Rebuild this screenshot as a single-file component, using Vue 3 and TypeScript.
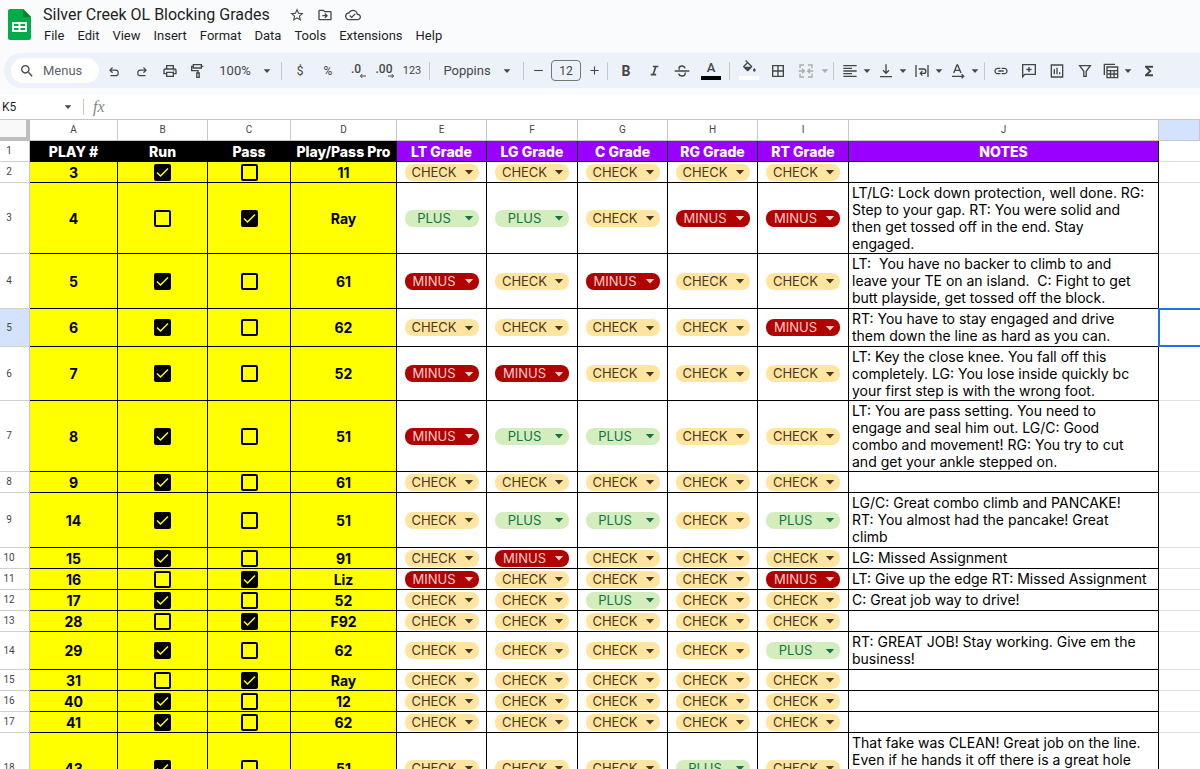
<script setup lang="ts">
import { h, ref, type FunctionalComponent } from 'vue'

interface Glyph { d: string; line?: number }

const glyphs: Record<string, Glyph> = {
  star: { d: 'M22 9.24l-7.19-.62L12 2 9.19 8.63 2 9.24l5.46 4.73L5.82 21 12 17.27 18.18 21l-1.63-7.03L22 9.24zM12 15.4l-3.76 2.27 1-4.28-3.32-2.88 4.38-.38L12 6.1l1.71 4.04 4.38.38-3.32 2.88 1 4.28L12 15.4z' },
  move: { d: 'M20 6h-8l-2-2H4c-1.1 0-2 .9-2 2v12c0 1.1.9 2 2 2h16c1.1 0 2-.9 2-2V8c0-1.1-.9-2-2-2zm0 12H4V6h5.17l2 2H20v10zM12.5 17l4-4-4-4-1.4 1.4 1.6 1.6H8v2h4.7l-1.6 1.6z' },
  cloud: { d: 'M19.35 10.04C18.67 6.59 15.64 4 12 4 9.11 4 6.61 5.64 5.36 8.04 2.35 8.36 0 10.91 0 14c0 3.31 2.69 6 6 6h13c2.76 0 5-2.24 5-5 0-2.64-2.05-4.78-4.65-4.96zM19 18H6c-2.21 0-4-1.79-4-4 0-2.05 1.53-3.76 3.56-3.97l1.07-.11.5-.95C8.08 7.14 9.94 6 12 6c2.62 0 4.88 1.86 5.39 4.43l.3 1.5 1.53.11c1.56.1 2.78 1.41 2.78 2.96 0 1.65-1.35 3-3 3zm-9-3.82l-2.09-2.09L6.5 13.5 10 17l6.01-6.01-1.41-1.41z' },
  search: { d: 'M15.5 14h-.79l-.28-.27C15.41 12.59 16 11.11 16 9.5 16 5.91 13.09 3 9.5 3S3 5.91 3 9.5 5.91 16 9.5 16c1.61 0 3.09-.59 4.23-1.57l.27.28v.79l5 4.99L20.49 19l-4.99-5zm-6 0C7.01 14 5 11.99 5 9.5S7.01 5 9.5 5 14 7.01 14 9.5 11.99 14 9.5 14z' },
  undo: { d: 'M6 20h8.5a4.75 4.75 0 0 0 0-9.5H5M9.5 6L5 10.5 9.5 15', line: 2 },
  redo: { d: 'M18 20H9.500a4.750 4.750 0 0 1 0-9.500H19M14.500 6L19 10.500 14.500 15', line: 2 },
  print: { d: 'M19 8h-1V3H6v5H5c-1.66 0-3 1.34-3 3v6h4v4h12v-4h4v-6c0-1.66-1.34-3-3-3zM8 5h8v3H8V5zm8 12v2H8v-4h8v2zm2-2v-2H6v2H4v-4c0-.55.45-1 1-1h14c.55 0 1 .45 1 1v4h-2zM17 10.700h1.800v1.600H17z' },
  paint: { d: 'M5 2.500h12v5H5zM5 5H2.500v6.500H12V15M17 5h3M10.200 15h3.600v6.500h-3.600z', line: 2 },
  minus: { d: 'M4 12h16', line: 2 },
  plus: { d: 'M4.500 12h15M12 4.500v15', line: 2 },
  italic: { d: 'M9 4.500h10M5 19.500h10M14.500 4.500l-5 15', line: 3 },
  strike: { d: 'M1 12h22M16.500 8c-.5-2.300-2.200-3.500-4.500-3.500-2.500 0-4.500 1.300-4.500 3.500 0 .8.3 1.500.8 2M7 16c.5 2.300 2.500 3.500 5 3.500 2.700 0 4.800-1.400 4.800-3.500 0-.7-.2-1.300-.6-1.800', line: 2 },
  fill: { d: 'M16.560 8.940L7.620 0 6.210 1.410l2.380 2.380-5.150 5.150c-.59.59-.59 1.540 0 2.120l5.500 5.500c.29.29.68.44 1.060.44s.77-.15 1.060-.44l5.500-5.500c.59-.58.59-1.530 0-2.120zM5.210 10L10 5.210 14.790 10H5.210zM20 12s-2 2.170-2 3.500c0 1.100.9 2 2 2s2-.9 2-2c0-1.330-2-3.500-2-3.500z' },
  borders: { d: 'M3 3v18h18V3H3zm8 16H5v-6h6v6zm0-8H5V5h6v6zm8 8h-6v-6h6v6zm0-8h-6V5h6v6z' },
  merge: { d: 'M9 3H3v5M3 16v5h6M15 3h6v5M21 16v5h-6M1 12h7M6 8.500L9.500 12 6 15.500M23 12h-7M18 8.500L14.500 12l3.500 3.500', line: 2 },
  align: { d: 'M15 15H2v2h13v-2zm0-8H2v2h13V7zM2 13h20v-2H2v2zm0 8h20v-2H2v2zM2 3v2h20V3H2z' },
  bottom: { d: 'M12 2v13M7.500 11l4.500 4.500 4.500-4.500M3 20.500h18', line: 2 },
  wrap: { d: 'M3 3v18M21 3v18M7 9h7.500a3 3 0 0 1 0 6.500H10M12.500 12L9.500 15.500l3 3.500', line: 2 },
  rotate: { d: 'M5.500 15l5-12h1l5 12M7.500 11h7M3 20h17M17.500 17l3 3-3 3', line: 2 },
  link: { d: 'M3.900 12c0-1.710 1.390-3.100 3.100-3.100h4V7H7c-2.760 0-5 2.240-5 5s2.240 5 5 5h4v-1.900H7c-1.710 0-3.100-1.390-3.100-3.100zM8 13h8v-2H8v2zm9-6h-4v1.900h4c1.710 0 3.100 1.390 3.100 3.100s-1.390 3.100-3.100 3.100h-4V17h4c2.760 0 5-2.240 5-5s-2.240-5-5-5z' },
  comment: { d: 'M2.500 20.500v-18h19v14.500H5.500zM12 6v7.500M8.200 9.800h7.600', line: 2 },
  chart: { d: 'M3.500 3h17v18h-17zM8 9.500V17M12 7v10M16 14v3', line: 2 },
  filter: { d: 'M4 4h16l-6.200 8.500V20h-3.600v-7.500z', line: 2 },
  views: { d: 'M2 18V2h16M6 6h16v16H6zM6 11.500h16M6 16.500h16M11.300 11.500V22M16.600 11.500V22', line: 2 },
  sum: { d: 'M18 4H6v2.500L12 12l-6 5.500V20h12v-3h-7l5-5-5-5h7z' },
  left: { d: 'M21 12H5M10 6l-6 6 6 6', line: 3 },
  right: { d: 'M3 12h16M14 6l6 6-6 6', line: 3 },
  caret: { d: 'M2 7h20L12 18z' },
}

const Icon: FunctionalComponent<{ name: string }> = (props) => {
  const g = glyphs[props.name]
  return h('svg', { viewBox: '0 0 24 24', 'aria-hidden': 'true' }, [
    h('path', g.line
      ? { d: g.d, fill: 'none', stroke: 'currentColor', 'stroke-width': g.line }
      : { d: g.d, fill: 'currentColor' }),
  ])
}
Icon.props = ['name']

const menus = ['File', 'Edit', 'View', 'Insert', 'Format', 'Data', 'Tools', 'Extensions', 'Help']
const letters = ['A', 'B', 'C', 'D', 'E', 'F', 'G', 'H', 'I', 'J', '']
const titles = ['PLAY #', 'Run', 'Pass', 'Play/Pass Pro', 'LT Grade', 'LG Grade', 'C Grade', 'RG Grade', 'RT Grade', 'NOTES']
const positions = ['LT', 'LG', 'C', 'RG', 'RT']
const options = ['CHECK', 'PLUS', 'MINUS']
const names: Record<string, string> = { C: 'CHECK', P: 'PLUS', M: 'MINUS' }

interface Play { num: string; run: boolean; pro: string; grades: string[]; height: number; notes: string[] }

const play = (num: string, run: boolean, pro: string, code: string, height: number, ...notes: string[]): Play =>
  ({ num, run, pro, grades: code.split('').map((c) => names[c]), height, notes })

const plays = ref<Play[]>([
  play('3', true, '11', 'CCCCC', 21),
  play('4', false, 'Ray', 'PPCMM', 71, 'LT/LG: Lock down protection, well done. RG:', 'Step to your gap. RT: You were solid and', 'then get tossed off in the end. Stay', 'engaged.'),
  play('5', true, '61', 'MCMCC', 55, 'LT:  You have no backer to climb to and', 'leave your TE on an island.  C: Fight to get', 'butt playside, get tossed off the block.'),
  play('6', true, '62', 'CCCCM', 38, 'RT: You have to stay engaged and drive', 'them down the line as hard as you can.'),
  play('7', true, '52', 'MMCCC', 54, 'LT: Key the close knee. You fall off this', 'completely. LG: You lose inside quickly bc', 'your first step is with the wrong foot.'),
  play('8', true, '51', 'MPPCC', 71, 'LT: You are pass setting. You need to', 'engage and seal him out. LG/C: Good', 'combo and movement! RG: You try to cut', 'and get your ankle stepped on.'),
  play('9', true, '61', 'CCCCC', 21),
  play('14', true, '51', 'CPPCP', 55, 'LG/C: Great combo climb and PANCAKE!', 'RT: You almost had the pancake! Great', 'climb'),
  play('15', true, '91', 'CMCCC', 21, 'LG: Missed Assignment'),
  play('16', false, 'Liz', 'MCCCM', 21, 'LT: Give up the edge RT: Missed Assignment'),
  play('17', true, '52', 'CCPCC', 21, 'C: Great job way to drive!'),
  play('28', false, 'F92', 'CCCCC', 21),
  play('29', true, '62', 'CCCCP', 38, 'RT: GREAT JOB! Stay working. Give em the', 'business!'),
  play('31', false, 'Ray', 'CCCCC', 21),
  play('40', true, '12', 'CCCCC', 21),
  play('41', true, '62', 'CCCCC', 21),
  play('43', true, '51', 'CCCPC', 71, 'That fake was CLEAN! Great job on the line.', 'Even if he hands it off there is a great hole'),
])
</script>

<template>
  <div class="app">
    <header class="top">
      <svg class="logo" viewBox="0 0 23 31" aria-hidden="true">
        <path d="M2 0h13l8 8v21a2 2 0 0 1-2 2H2a2 2 0 0 1-2-2V2a2 2 0 0 1 2-2z" fill="#00ac47" />
        <path d="M15 0l8 8h-8z" fill="#00832d" />
        <path d="M4 13h15v10H4zM6 15v2h4.500v-2zM12.500 15v2H17v-2zM6 19v2h4.500v-2zM12.500 19v2H17v-2z" fill="#fff" fill-rule="evenodd" />
      </svg>
      <div class="heading">
        <div class="title-row">
          <h1>Silver Creek OL Blocking Grades</h1>
          <button aria-label="Star"><Icon name="star" /></button>
          <button aria-label="Move"><Icon name="move" /></button>
          <button aria-label="Saved to Drive"><Icon name="cloud" /></button>
        </div>
        <nav class="menus">
          <button v-for="m in menus" :key="m">{{ m }}</button>
        </nav>
      </div>
    </header>

    <div class="toolbar" role="toolbar">
      <label class="search"><Icon name="search" /><input type="text" placeholder="Menus" aria-label="Menus" /></label>
      <button aria-label="Undo"><Icon name="undo" class="low" /></button>
      <button aria-label="Redo"><Icon name="redo" class="low" /></button>
      <button aria-label="Print"><Icon name="print" /></button>
      <button aria-label="Paint format"><Icon name="paint" /></button>
      <button class="zoom">100%<Icon name="caret" class="caret" /></button>
      <i class="rule"></i>
      <button class="small" aria-label="Currency">$</button>
      <button class="small" aria-label="Percent">%</button>
      <button class="decimal" aria-label="Decrease decimal places">.0<Icon name="left" class="arrow" /></button>
      <button class="decimal" aria-label="Increase decimal places">.00<Icon name="right" class="arrow" /></button>
      <button class="digits">123</button>
      <i class="rule"></i>
      <button class="family">Poppins<Icon name="caret" class="caret" /></button>
      <i class="rule"></i>
      <button class="step" aria-label="Decrease font size"><Icon name="minus" class="tiny" /></button>
      <input class="size" type="text" value="12" aria-label="Font size" />
      <button class="step" aria-label="Increase font size"><Icon name="plus" class="tiny" /></button>
      <i class="rule"></i>
      <button class="bold" aria-label="Bold">B</button>
      <button aria-label="Italic"><Icon name="italic" class="tiny" /></button>
      <button aria-label="Strikethrough"><Icon name="strike" /></button>
      <button class="color" aria-label="Text color"><b>A</b><i class="swatch black"></i></button>
      <i class="rule"></i>
      <button class="color" aria-label="Fill color"><Icon name="fill" /><i class="swatch white"></i></button>
      <button aria-label="Borders"><Icon name="borders" /></button>
      <button class="off" aria-label="Merge cells"><Icon name="merge" /></button>
      <button class="off slim" aria-label="Merge type"><Icon name="caret" class="caret" /></button>
      <i class="rule"></i>
      <button class="split" aria-label="Horizontal align"><Icon name="align" /><Icon name="caret" class="caret" /></button>
      <button class="split" aria-label="Vertical align"><Icon name="bottom" /><Icon name="caret" class="caret" /></button>
      <button class="split" aria-label="Text wrapping"><Icon name="wrap" /><Icon name="caret" class="caret" /></button>
      <button class="split" aria-label="Text rotation"><Icon name="rotate" /><Icon name="caret" class="caret" /></button>
      <i class="rule tight"></i>
      <button aria-label="Insert link"><Icon name="link" /></button>
      <button aria-label="Insert comment"><Icon name="comment" /></button>
      <button aria-label="Insert chart"><Icon name="chart" /></button>
      <button aria-label="Filter"><Icon name="filter" /></button>
      <button class="split" aria-label="Filter views"><Icon name="views" /><Icon name="caret" class="caret" /></button>
      <button aria-label="Functions"><Icon name="sum" /></button>
    </div>

    <div class="formula">
      <input class="cell-name" type="text" value="K5" aria-label="Name box" />
      <button aria-label="Named ranges"><Icon name="caret" class="caret" /></button>
      <i class="rule"></i>
      <span class="fx">fx</span>
      <input class="entry" type="text" aria-label="Formula" />
    </div>

    <main class="sheet">
      <table>
        <colgroup>
          <col class="w-head" /><col class="w-a" /><col class="w-b" /><col class="w-c" /><col class="w-d" />
          <col class="w-b" /><col class="w-f" /><col class="w-b" /><col class="w-b" /><col class="w-f" />
          <col class="w-notes" /><col />
        </colgroup>
        <thead>
          <tr class="letters">
            <td class="corner"></td>
            <th v-for="(l, i) in letters" :key="i" scope="col" :class="{ active: i === 10 }">{{ l }}</th>
          </tr>
        </thead>
        <tbody>
          <tr class="titles">
            <th class="num" scope="row">1</th>
            <td v-for="(t, i) in titles" :key="t" :class="i < 4 ? 'dark' : 'purple'">{{ t }}</td>
            <td class="blank"></td>
          </tr>
          <tr v-for="(p, r) in plays" :key="p.num" :style="{ height: p.height + 'px' }">
            <th class="num" :class="{ active: r === 3 }" scope="row">{{ r + 2 }}</th>
            <td class="yellow">{{ p.num }}</td>
            <td v-for="kind in ['Run', 'Pass']" :key="kind" class="yellow">
              <label class="tick">
                <input type="checkbox" :checked="(kind === 'Run') === p.run" :aria-label="`${kind}, play ${p.num}`" />
                <svg viewBox="0 0 17 17" aria-hidden="true"><path d="M3 8.500l3.500 3.500L14 4.500" fill="none" stroke="#ff0" stroke-width="1.500" /></svg>
              </label>
            </td>
            <td class="yellow">{{ p.pro }}</td>
            <td v-for="(g, i) in p.grades" :key="i" class="grade">
              <span class="chip" :class="g.toLowerCase()">
                <select v-model="p.grades[i]" :aria-label="`${positions[i]} grade, play ${p.num}`">
                  <option v-for="o in options" :key="o">{{ o }}</option>
                </select>
                <Icon name="caret" class="chip-caret" />
              </span>
            </td>
            <td class="notes"><div v-for="n in p.notes" :key="n">{{ n }}</div></td>
            <td class="blank" :class="{ selected: r === 3 }"></td>
          </tr>
        </tbody>
      </table>
    </main>
  </div>
</template>

<style>
body { margin: 0; overflow: hidden; }
</style>

<style scoped>
.app {
  display: flex;
  flex-direction: column;
  height: 100vh;
  overflow: hidden;
  background: #f9fbfd;
  color: #444746;
  font-family: Roboto, "Liberation Sans", sans-serif;
}
* { box-sizing: border-box; }
button, input, select { margin: 0; padding: 0; border: 0; background: none; color: inherit; font: inherit; outline: 0; }
svg { display: block; flex: none; }

.top { display: flex; gap: 12px; padding: 4px 8px 0; flex: none; }
.logo { width: 23px; height: 31px; margin-top: 5px; }
.title-row { display: flex; align-items: center; height: 21px; }
.title-row h1 { margin: 0 13px 0 0; font-size: 16px; line-height: 21px; font-weight: 400; color: #1f1f1f; white-space: nowrap; }
.title-row button { display: grid; place-items: center; width: 28px; height: 21px; }
.title-row svg { width: 16px; height: 16px; }
.menus { display: flex; gap: 13px; padding: 2px 0 0 1px; }
.menus button { font-size: 13px; line-height: 18px; color: #1f1f1f; }

.toolbar {
  display: flex;
  align-items: center;
  flex: none;
  height: 35px;
  margin: 8px 0 6px 4px;
  padding-left: 7px;
  border-radius: 18px 0 0 18px;
  background: #edf2fa;
  font-size: 13px;
}
.toolbar button { display: flex; align-items: center; justify-content: center; flex: none; width: 28px; height: 26px; }
.toolbar svg { width: 16px; height: 16px; }
.toolbar svg.low { width: 14px; height: 14px; }
.toolbar svg.tiny { width: 13px; height: 13px; }
.toolbar svg.caret, .formula svg.caret { width: 8px; height: 8px; }
.search { display: flex; align-items: center; gap: 8px; flex: none; width: 88px; height: 25px; margin-right: 1px; padding-left: 8px; border-radius: 13px; background: #fff; }
.search input { width: 50px; }
.search input::placeholder { color: #5f6368; opacity: 1; }
.toolbar .zoom { width: 66px; gap: 12px; }
.toolbar .family { width: 86px; gap: 12px; }
.rule { flex: none; width: 1px; height: 18px; margin: 0 4px 0 3px; background: #c7c7c7; }
.rule.tight { margin: 0 2px; }
.toolbar .small { font-size: 12px; }
.toolbar .digits { font-size: 11px; }
.toolbar .decimal { flex-direction: column; align-items: center; padding-top: 3px; font-size: 12px; line-height: 10px; font-weight: 500; }
.toolbar svg.arrow { width: 8px; height: 8px; margin: -2px 0 0 14px; }
.toolbar .step { width: 20px; }
.size { flex: none; width: 30px; height: 21px; margin: 0 3px; border: 1px solid #747775; border-radius: 4px; text-align: center; font-size: 12px; }
.toolbar .bold { font-size: 14px; font-weight: 700; }
.toolbar .color { flex-direction: column; width: 30px; height: 28px; justify-content: space-between; padding: 3px 0 5px; }
.color svg { margin-bottom: -2px; }
.color b { font-size: 13px; line-height: 16px; font-weight: 500; }
.swatch { flex: none; width: 20px; height: 4px; }
.black { background: #000; }
.white { background: #fff; }
.off { opacity: .4; }
.toolbar .slim { width: 10px; }
.toolbar .split { width: 36px; gap: 5px; }

.formula { display: flex; align-items: center; flex: none; height: 26px; border-bottom: 1px solid #c7c7c7; background: #fff; font-size: 12px; }
.cell-name { width: 60px; padding-left: 2px; color: #1f1f1f; }
.formula button { display: grid; place-items: center; width: 16px; height: 20px; }
.formula .rule { margin: 0 9px 0 7px; height: 16px; }
.fx { font: italic 16px "Liberation Serif", serif; color: #80868b; }
.entry { flex: 1; min-width: 0; }

.sheet { flex: 1; min-height: 0; overflow: hidden; background: #fff; }
table { width: 100%; table-layout: fixed; border-collapse: separate; border-spacing: 0; }
td, th { padding: 0; }
.w-head { width: 30px; }
.w-a { width: 88px; }
.w-b { width: 90px; }
.w-c { width: 83px; }
.w-d { width: 106px; }
.w-f { width: 91px; }
.w-notes { width: 310px; }
.letters, .titles { height: 21px; }
.letters th { border-right: 1px solid #c7c7c7; border-bottom: 1px solid #c7c7c7; font-size: 10px; line-height: 12px; font-weight: 400; }
.letters .corner { border-right: 4px solid #bdbdbd; border-bottom: 4px solid #bdbdbd; background: #f8f9fa; }
.num { padding-right: 11px; border-right: 1px solid #c7c7c7; border-bottom: 1px solid #d0d0d0; font-size: 10px; line-height: 12px; font-weight: 400; }
.letters .active, .num.active { background: #d3e3fd; }
.titles td, .yellow { border-right: 1px solid #000; border-bottom: 1px solid #000; text-align: center; font-family: Inter, sans-serif; font-size: 14px; line-height: 17px; font-weight: 700; white-space: nowrap; }
.titles td { font-weight: 800; }
.titles .dark { background: #000; color: #fff; }
.titles .purple { background: #90f; color: #fff; }
.yellow { background: #ff0; color: #000; }
.tick { display: grid; place-content: center; }
.tick input, .tick svg { grid-area: 1 / 1; width: 17px; height: 17px; }
.tick input { appearance: none; border: 2px solid #000; border-radius: 2px; }
.tick input:checked { background: #000; }
.tick svg { visibility: hidden; pointer-events: none; }
.tick input:checked + svg { visibility: visible; }
.grade { border-right: 1px solid #000; border-bottom: 1px solid #000; }
.chip { display: grid; align-items: center; width: 74px; height: 17px; margin: 0 auto; border-radius: 8px; }
.chip select { grid-area: 1 / 1; appearance: none; width: 74px; height: 17px; padding-right: 15px; border-radius: 8px; font-family: Inter, sans-serif; font-size: 13px; line-height: 17px; text-align: center; text-align-last: center; }
.chip-caret { grid-area: 1 / 1; justify-self: end; width: 10px; height: 10px; margin-right: 5px; pointer-events: none; }
.check { background: #ffe5a0; color: #473821; }
.plus { background: #d4edbc; color: #11734b; }
.minus { background: #b10202; color: #ffcfc9; }
.notes { padding: 1px 0 0 3px; border-right: 1px solid #000; border-bottom: 1px solid #000; vertical-align: top; color: #000; font-family: Inter, sans-serif; font-size: 14px; line-height: 17px; white-space: pre; }
.titles .blank, .blank { border-right: 0; border-bottom: 1px solid #e1e1e1; }
.selected { position: relative; }
.selected::after { content: ""; position: absolute; inset: -1px 0 -1px -1px; border: 2px solid #1a73e8; border-right: 0; }
</style>
